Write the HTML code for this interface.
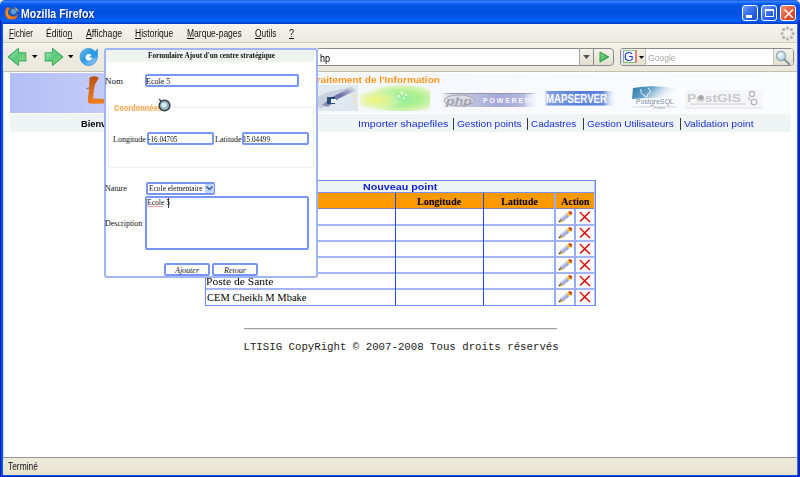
<!DOCTYPE html>
<html><head><meta charset="utf-8">
<style>
*{box-sizing:border-box}
html,body{margin:0;padding:0}
body{width:800px;height:477px;position:relative;overflow:hidden;background:#0054e3;font-family:"Liberation Sans",sans-serif}
.a{position:absolute}
.t{position:absolute;white-space:nowrap;line-height:1}
#title{left:0;top:0;width:800px;height:24px;border-radius:5px 5px 0 0;
background:linear-gradient(#0a3fd0 0,#3c8cff 1px,#2a78f8 2px,#0a5cf0 4px,#0052e5 7px,#0050e2 15px,#0058ee 18px,#0062f8 21px,#0048d8 23px,#0038c0 24px)}
#menubar{left:3px;top:24px;width:794px;height:19px;background:linear-gradient(#f4f3ee,#ecebe2);border-bottom:1px solid #d0cbb8}
#toolbar{left:3px;top:43px;width:794px;height:29px;background:linear-gradient(#f6f5ee,#eeece2 30%,#ebe8dc);border-bottom:1px solid #c4c0ae}
#content{left:3px;top:72px;width:794px;height:385px;background:#fff}
#status{left:3px;top:457px;width:794px;height:18px;background:linear-gradient(#ecead8,#ebe7d6 60%,#e6e2cc);border-top:1px solid #98968a}
.menu{font-size:10px;color:#111;top:29px}
.menu u{text-decoration:underline}
</style></head><body>
<div class="a" style="left:0;top:0;width:800px;height:10px;background:#f0e8c8"></div>
<div id="title" class="a"></div>
<div class="a" style="left:0;top:20px;width:1px;height:457px;background:#0818c0"></div>
<div class="a" style="left:798px;top:20px;width:2px;height:457px;background:#0a26b4"></div>
<div class="a" style="left:0;top:476px;width:800px;height:1px;background:#0828c0"></div>
<!-- firefox icon -->
<svg class="a" style="left:4px;top:6px" width="15" height="14"><circle cx="8.5" cy="6.5" r="5.5" fill="#2258b0"/><circle cx="9.5" cy="5.5" r="2.8" fill="#58a0e0"/><path d="M2.5 1.5Q4.5 0.8 6 2.5Q3.5 4 4 7.5Q5.5 11 10 10.5Q13 10 14 8Q13.5 13.5 8 13.5Q1.5 13.5 1 8Q1 4 2.5 1.5Z" fill="#f07010"/><path d="M3 3Q2 6 3 9Q4 12 8 12.5Q4.5 11 4 8Z" fill="#f8a030"/><path d="M10 1Q14 2 14.5 6L12.5 4.5Q11.5 2 10 1Z" fill="#f0b030"/></svg>
<div class="t" style="left:21px;top:8.2px;font-size:12px;font-weight:bold;color:#fff;transform:scaleX(0.88);transform-origin:0 0;text-shadow:1px 1px 0 #0030a0">Mozilla Firefox</div>
<!-- window buttons -->
<div class="a" style="left:742px;top:5px;width:16px;height:16px;border:1px solid #fff;border-radius:3px;background:linear-gradient(135deg,#6f9cf8,#2a62e8 60%,#1a50d8)"><div class="a" style="left:3px;top:9px;width:6px;height:3px;background:#fff"></div></div>
<div class="a" style="left:761px;top:5px;width:16px;height:16px;border:1px solid #fff;border-radius:3px;background:linear-gradient(135deg,#6f9cf8,#2a62e8 60%,#1a50d8)"><div class="a" style="left:3px;top:3px;width:9px;height:8px;border:1px solid #fff;border-top-width:2px"></div></div>
<div class="a" style="left:780px;top:5px;width:16px;height:16px;border:1px solid #fff;border-radius:3px;background:linear-gradient(135deg,#f09070,#e05030 60%,#c83818)">
<svg class="a" style="left:1px;top:1px" width="13" height="13"><path d="M2.5 2.5L11 11M11 2.5L2.5 11" stroke="#fff" stroke-width="1.5"/></svg></div>

<div id="menubar" class="a"></div>
<div class="t menu" style="left:9px;transform:scaleX(0.8);transform-origin:0 0"><u>F</u>ichier</div>
<div class="t menu" style="left:46px;transform:scaleX(0.86);transform-origin:0 0">Éditio<u>n</u></div>
<div class="t menu" style="left:86px;transform:scaleX(0.87);transform-origin:0 0"><u>A</u>ffichage</div>
<div class="t menu" style="left:135px;transform:scaleX(0.85);transform-origin:0 0"><u>H</u>istorique</div>
<div class="t menu" style="left:187px;transform:scaleX(0.85);transform-origin:0 0"><u>M</u>arque-pages</div>
<div class="t menu" style="left:255px;transform:scaleX(0.84);transform-origin:0 0"><u>O</u>utils</div>
<div class="t menu" style="left:289px;transform:scaleX(0.9);transform-origin:0 0"><u>?</u></div>
<!-- throbber -->
<svg class="a" style="left:780px;top:26px" width="15" height="15"><g fill="#b4b4b4"><circle cx="7.5" cy="2" r="1.6"/><circle cx="11.4" cy="3.6" r="1.6"/><circle cx="13" cy="7.5" r="1.6"/><circle cx="11.4" cy="11.4" r="1.6"/><circle cx="7.5" cy="13" r="1.6"/><circle cx="3.6" cy="11.4" r="1.6"/><circle cx="2" cy="7.5" r="1.6"/><circle cx="3.6" cy="3.6" r="1.6"/></g></svg>

<div id="toolbar" class="a"></div>
<!-- back -->
<svg class="a" style="left:7px;top:47px" width="21" height="20"><defs><linearGradient id="ga" x1="0" y1="0" x2="1" y2="1"><stop offset="0" stop-color="#b0ecb8"/><stop offset=".5" stop-color="#58c880"/><stop offset="1" stop-color="#a8dc68"/></linearGradient></defs>
<path d="M1.2 10L11.5 1.5V5.7H18.8V13.9H11.5V18.3Z" fill="url(#ga)" stroke="#3cb060" stroke-width="1.1" stroke-linejoin="round"/></svg>
<svg class="a" style="left:32px;top:55px" width="6" height="4"><path d="M0 0H5.5L2.75 3.2Z" fill="#000"/></svg>
<!-- forward -->
<svg class="a" style="left:43px;top:47px" width="21" height="20"><defs><linearGradient id="gb" x1="0" y1="0" x2="1" y2="1"><stop offset="0" stop-color="#b0ecb8"/><stop offset=".5" stop-color="#58c880"/><stop offset="1" stop-color="#a8dc68"/></linearGradient></defs>
<path d="M19.8 10L9.5 1.5V5.7H2.2V13.9H9.5V18.3Z" fill="url(#gb)" stroke="#3cb060" stroke-width="1.1" stroke-linejoin="round"/></svg>
<svg class="a" style="left:68px;top:55px" width="6" height="4"><path d="M0 0H5.5L2.75 3.2Z" fill="#000"/></svg>
<!-- reload -->
<svg class="a" style="left:79px;top:47px" width="21" height="21"><defs><linearGradient id="gr" x1="0" y1="0" x2="1" y2="1"><stop offset="0" stop-color="#70c0f0"/><stop offset=".45" stop-color="#2a98e0"/><stop offset="1" stop-color="#a8d8f4"/></linearGradient></defs>
<circle cx="9.6" cy="10" r="8.6" fill="url(#gr)" stroke="#3a90d8" stroke-width=".8"/><circle cx="9.8" cy="10.2" r="3.2" fill="#fff"/><path d="M18.8 1.2V10.6H10.2Z" fill="#2c9ae2"/></svg>
<!-- url bar -->
<div class="a" style="left:318px;top:48px;width:262px;height:18px;background:#fff;border-top:1px solid #8a8a8a;border-bottom:1px solid #8a8a8a"></div>
<div class="t" style="left:319.5px;top:52.5px;font-size:10.6px;color:#000;transform:scaleX(0.86);transform-origin:0 0">hp</div>
<div class="a" style="left:579px;top:48px;width:15px;height:18px;background:linear-gradient(#f4f2ea,#e2dfd0);border:1px solid #8a8a8a;border-left:1px solid #a0a0a8"></div>
<svg class="a" style="left:583px;top:55px" width="8" height="5"><path d="M0 0H7L3.5 4Z" fill="#555"/></svg>
<div class="a" style="left:593px;top:48px;width:21px;height:18px;background:linear-gradient(#f4f2ea,#e2dfd0);border:1px solid #8a8a8a;border-radius:0 4px 4px 0"></div>
<svg class="a" style="left:599px;top:51px" width="11" height="12"><defs><linearGradient id="gg" x1="0" y1="0" x2="1" y2="1"><stop offset="0" stop-color="#90d890"/><stop offset="1" stop-color="#28a040"/></linearGradient></defs><path d="M1 1L9.8 6L1 11Z" fill="url(#gg)" stroke="#2a9a40" stroke-width="1" stroke-linejoin="round"/></svg>
<!-- search -->
<div class="a" style="left:620px;top:48px;width:174px;height:18px;background:#fff;border:1px solid #8a8a8a;border-radius:3px 4px 4px 3px"></div>
<div class="a" style="left:621px;top:49px;width:25px;height:16px;background:linear-gradient(#f2f0e6,#e4e1d2);border-right:1px solid #c8c4b0;border-radius:2px 0 0 2px"></div>
<div class="a" style="left:623px;top:50px;width:14px;height:13px;background:#f4f8fc;border-top:1px solid #88d088;border-bottom:1px solid #70c070;border-left:1px solid #80a8e8;border-right:2px solid #e88070"></div>
<div class="t" style="left:624px;top:50px;font-size:13px;color:#1838c8;transform:scaleX(0.95);transform-origin:0 0">G</div>
<svg class="a" style="left:639px;top:56px" width="6" height="4"><path d="M0 0H5L2.5 3Z" fill="#000"/></svg>
<div class="t" style="left:648px;top:54px;font-size:9px;color:#a8a8a0;transform:scaleX(0.95);transform-origin:0 0">Google</div>
<div class="a" style="left:773px;top:49px;width:20px;height:16px;background:linear-gradient(#f2f0e6,#e4e1d2);border-left:1px solid #c8c4b0;border-radius:0 3px 3px 0"></div>
<svg class="a" style="left:775px;top:50px" width="16" height="15"><defs><radialGradient id="lg" cx=".4" cy=".35" r=".6"><stop offset="0" stop-color="#f8fcff"/><stop offset="1" stop-color="#b0d0e0"/></radialGradient></defs><circle cx="6" cy="6" r="4.6" fill="url(#lg)" stroke="#90a8b8" stroke-width="1.2"/><path d="M9.5 9.5L14 14" stroke="#8098a8" stroke-width="2.2" stroke-linecap="round"/></svg>

<div id="content" class="a"></div>
<div class="a" style="left:3px;top:72px;width:1px;height:385px;background:#d0dcf8"></div>
<div class="a" style="left:797px;top:24px;width:1px;height:451px;background:#3c6cea"></div>
<!-- banner -->
<div class="a" style="left:10px;top:73px;width:781px;height:40px;background:linear-gradient(90deg,#b2bef5 0,#c2cbf8 12%,#dfe4fb 28%,#f5f7fd 40%,#fbfcfe 100%)"></div>
<svg class="a" style="left:84px;top:74px" width="22" height="32"><defs><linearGradient id="gl" x1="0" y1="0" x2="0" y2="1"><stop offset="0" stop-color="#b85010"/><stop offset=".5" stop-color="#d86818"/><stop offset="1" stop-color="#f08020"/></linearGradient></defs><path d="M5.5 4Q7 2.2 10 2.2Q14 2.2 14.6 4.5Q13 7 11.2 10Q9.6 15 9.2 24.6L21 25L21 29.2Q12 30 5 29.6Q3.4 28.6 3.8 26Q5.4 16 5.5 4Z" fill="url(#gl)"/><path d="M2.5 14.5L5 14" stroke="#806050" stroke-width="1" fill="none"/></svg>
<div class="t" style="left:311.4px;top:75.5px;font-size:9px;font-weight:bold;color:#ff9618;transform:scaleX(1.12);transform-origin:0 0">Traitement de l'Information</div>
<!-- images -->
<svg class="a" style="left:318px;top:85px;filter:blur(0.6px)" width="40" height="26"><defs><linearGradient id="sb" x1="0" y1="0" x2="1" y2="1"><stop offset="0" stop-color="#e4ecf2"/><stop offset="1" stop-color="#dde6ee"/></linearGradient><linearGradient id="sd" x1="0" y1="1" x2="1" y2="0"><stop offset="0" stop-color="#9098b0"/><stop offset=".6" stop-color="#6a6ea8"/><stop offset="1" stop-color="#c8c8e0"/></linearGradient></defs>
<rect width="40" height="26" fill="url(#sb)"/><path d="M0 12Q10 6 20 5L34 2L38 6Q26 10 18 14Q10 19 4 24L0 22Z" fill="#c8d0dc"/><path d="M4 20L14 12L30 4L36 6L20 14L10 22Z" fill="url(#sd)"/><rect x="9" y="12" width="8" height="7" fill="#2a4a7a"/><rect x="13" y="14" width="5" height="4" fill="#e8f0f8"/><circle cx="36" cy="11" r="1.5" fill="#f8d8b0"/><circle cx="36" cy="17" r="1.5" fill="#f8d8b0"/></svg>
<svg class="a" style="left:360px;top:84px" width="70" height="27"><defs><radialGradient id="mg" cx=".6" cy=".55" r=".62"><stop offset="0" stop-color="#90eca0"/><stop offset=".45" stop-color="#b0f090"/><stop offset=".75" stop-color="#d8f4b8"/><stop offset="1" stop-color="#f6f9fb" stop-opacity="0"/></radialGradient><radialGradient id="my" cx=".22" cy=".6" r=".4"><stop offset="0" stop-color="#eef478"/><stop offset=".6" stop-color="#e8f4a0" stop-opacity=".6"/><stop offset="1" stop-color="#f4f8e0" stop-opacity="0"/></radialGradient></defs>
<rect width="70" height="27" fill="url(#mg)"/><rect width="70" height="27" fill="url(#my)"/><circle cx="42" cy="9" r="1.3" fill="#fff" opacity=".9"/><circle cx="46" cy="11" r="1.1" fill="#fff" opacity=".9"/><circle cx="39" cy="12" r="1" fill="#fff" opacity=".9"/><circle cx="44" cy="14" r="1" fill="#fff" opacity=".7"/></svg>
<svg class="a" style="left:441px;top:90px" width="100" height="20"><defs><linearGradient id="pp" x1="0" y1="0" x2="1" y2="0"><stop offset="0" stop-color="#f0f0f4" stop-opacity="0"/><stop offset=".06" stop-color="#e0e0ea"/><stop offset=".3" stop-color="#c0c2e0"/><stop offset=".6" stop-color="#a4a8d6"/><stop offset=".85" stop-color="#b8bce0"/><stop offset="1" stop-color="#f4f4fa" stop-opacity="0"/></linearGradient><linearGradient id="pt" x1="0" y1="0" x2="1" y2="0"><stop offset="0" stop-color="#808088" stop-opacity="0"/><stop offset=".1" stop-color="#808088"/><stop offset=".9" stop-color="#9090a0"/><stop offset="1" stop-color="#9090a0" stop-opacity="0"/></linearGradient></defs>
<rect x="0" y="3" width="97" height="14" fill="url(#pp)"/><rect x="0" y="3" width="97" height="1" fill="url(#pt)" opacity=".7"/><ellipse cx="18" cy="10.5" rx="15" ry="5.5" fill="#dcdce6" stroke="#9a9aa8" stroke-width=".8"/><text x="5" y="14.5" font-family="Liberation Sans" font-style="italic" font-size="11" fill="#a4a4ac" font-weight="bold" textLength="26" lengthAdjust="spacingAndGlyphs">php</text><text x="42" y="13.2" font-family="Liberation Sans" font-size="7" font-weight="bold" fill="#f8f8fc" textLength="47" lengthAdjust="spacing">POWERED</text></svg>
<svg class="a" style="left:542px;top:88px" width="76" height="20"><defs><linearGradient id="ms" x1="0" y1="0" x2="1" y2="0"><stop offset="0" stop-color="#c8d4f4" stop-opacity="0"/><stop offset=".05" stop-color="#7898e0"/><stop offset=".5" stop-color="#4a78d8"/><stop offset=".82" stop-color="#5a84dc"/><stop offset="1" stop-color="#e8eefa" stop-opacity="0"/></linearGradient><linearGradient id="mv" x1="0" y1="0" x2="0" y2="1"><stop offset="0" stop-color="#fff" stop-opacity="0"/><stop offset=".5" stop-color="#fff" stop-opacity=".25"/><stop offset="1" stop-color="#fff" stop-opacity="0"/></linearGradient></defs>
<rect x="2" y="3" width="72" height="14.5" fill="url(#ms)"/><rect x="2" y="3" width="72" height="14.5" fill="url(#mv)"/><text x="4" y="15.4" font-family="Liberation Sans" font-size="13.6" font-weight="bold" fill="#fbfcff" textLength="61" lengthAdjust="spacingAndGlyphs">MAPSERVER</text></svg>
<svg class="a" style="left:630px;top:84px;filter:blur(0.5px)" width="50" height="26"><defs><linearGradient id="pg" x1="0" y1="0" x2="1" y2=".3"><stop offset="0" stop-color="#2a78a8"/><stop offset=".45" stop-color="#6aa4c8"/><stop offset="1" stop-color="#f4f8fc" stop-opacity="0"/></linearGradient></defs>
<path d="M3 4Q25 0 48 5L47 15Q25 13 2 15Z" fill="url(#pg)"/><path d="M11 5Q10 10 14 11Q15 14 17 13Q16 10 20 9Q21 5 18 4" stroke="#e8f4fa" stroke-width="1" fill="none"/><text x="6" y="20" font-family="Liberation Sans" font-size="6.8" fill="#8088a0" textLength="38" lengthAdjust="spacingAndGlyphs">PostgreSQL</text><text x="24" y="24.5" font-family="Liberation Sans" font-size="4" fill="#9098a8">Power</text><rect x="3" y="22.5" width="44" height=".8" fill="#c8ccd4"/></svg>
<svg class="a" style="left:684px;top:88px" width="80" height="22"><rect x="1" y="2" width="78" height="19" rx="2" fill="#f6f6f8"/><rect x="1" y="19.5" width="78" height="1" fill="#e4e4e8"/><text x="3" y="13.5" font-family="Liberation Sans" font-size="11" font-weight="bold" fill="#c8c8cc" textLength="54" lengthAdjust="spacingAndGlyphs">PostGIS</text><circle cx="17" cy="9.5" r="2.6" fill="#a8a8ac"/><rect x="6" y="15.5" width="56" height="1.2" fill="#d4d4d8"/><circle cx="68" cy="6" r="2.6" fill="none" stroke="#b0b0b4" stroke-width="1.1"/><circle cx="70" cy="14" r="2.8" fill="none" stroke="#b0b0b4" stroke-width="1.1"/><path d="M65 9Q64 12 67 12" stroke="#b8b8bc" stroke-width="1.1" fill="none"/></svg>
<!-- nav row -->
<div class="a" style="left:10px;top:114px;width:781px;height:18px;background:#eef3f3"></div>
<div class="t" style="left:81px;top:120px;font-size:8.6px;font-weight:bold;color:#000;transform:scaleX(1.08);transform-origin:0 0">Bienvenue</div>
<div class="t" style="left:358.3px;top:119px;font-size:9.8px;color:#1a2ed8;transform:scaleX(1.085);transform-origin:0 0">Importer shapefiles</div>
<div class="t" style="left:456.9px;top:119px;font-size:9.8px;color:#1a2ed8;transform:scaleX(1.03);transform-origin:0 0">Gestion points</div>
<div class="t" style="left:531.3px;top:119px;font-size:9.8px;color:#1a2ed8;transform:scaleX(1.01);transform-origin:0 0">Cadastres</div>
<div class="t" style="left:586.6px;top:119px;font-size:9.8px;color:#1a2ed8;transform:scaleX(1.02);transform-origin:0 0">Gestion Utilisateurs</div>
<div class="t" style="left:683.7px;top:119px;font-size:9.8px;color:#1a2ed8;transform:scaleX(1.05);transform-origin:0 0">Validation point</div>
<div class="a" style="left:453px;top:118px;width:1px;height:12px;background:#383838"></div>
<div class="a" style="left:527px;top:118px;width:1px;height:12px;background:#383838"></div>
<div class="a" style="left:583px;top:118px;width:1px;height:12px;background:#383838"></div>
<div class="a" style="left:680px;top:118px;width:1px;height:12px;background:#383838"></div>

<!-- table -->
<div class="a" style="left:205px;top:180px;width:391px;height:126px;border:1px solid #6c8cf0;background:#fff"></div>
<div class="a" style="left:206px;top:181px;width:389px;height:12px;background:#eef3f3;border-bottom:1px solid #6c8cf0"></div>
<div class="t" style="left:363px;top:183px;font-size:9px;font-weight:bold;color:#1020d8;transform:scaleX(1.19);transform-origin:0 0">Nouveau point</div>
<div class="a" style="left:206px;top:192px;width:389px;height:17px;background:#ff9900;border-top:1px solid #7890e8;border-bottom:1px solid #8c80b8"></div>
<div class="a" style="left:206px;top:224px;width:389px;height:2px;background:#a4b4f8"></div>
<div class="a" style="left:206px;top:240px;width:389px;height:2px;background:#a4b4f8"></div>
<div class="a" style="left:206px;top:256px;width:389px;height:2px;background:#a4b4f8"></div>
<div class="a" style="left:206px;top:272px;width:389px;height:2px;background:#a4b4f8"></div>
<div class="a" style="left:206px;top:288px;width:389px;height:2px;background:#a4b4f8"></div>
<div class="a" style="left:395px;top:193px;width:1px;height:112px;background:#2848e0"></div>
<div class="a" style="left:483px;top:193px;width:1px;height:112px;background:#2848e0"></div>
<div class="a" style="left:554px;top:193px;width:2px;height:112px;background:#98acf8"></div>
<div class="a" style="left:574px;top:209px;width:2px;height:96px;background:#98acf8"></div>
<div class="a" style="left:594px;top:181px;width:1px;height:124px;background:#b4c4fa"></div>
<div class="t" style="left:417px;top:197px;font-family:'Liberation Serif',serif;font-weight:bold;font-size:10px;color:#000">Longitude</div>
<div class="t" style="left:501px;top:197px;font-family:'Liberation Serif',serif;font-weight:bold;font-size:10px;color:#000">Latitude</div>
<div class="t" style="left:561px;top:197px;font-family:'Liberation Serif',serif;font-weight:bold;font-size:10px;color:#000">Action</div>
<div class="t" style="left:206px;top:277px;font-family:'Liberation Serif',serif;font-size:10.5px;color:#000;transform:scaleX(1.1);transform-origin:0 0">Poste de Sante</div>
<div class="t" style="left:207px;top:293px;font-family:'Liberation Serif',serif;font-size:10.5px;color:#000">CEM Cheikh M Mbake</div>
<svg class="a" style="left:557px;top:210px" width="17" height="14"><path d="M1.50 12.30 L3.47 11.89 L2.36 10.48Z" fill="#101010"/><path d="M3.47 11.89 L5.88 11.40 L3.41 8.26 L2.36 10.48Z" fill="#b08828"/><path d="M5.88 11.40 L12.17 6.46 L9.70 3.31 L3.41 8.26Z" fill="#9ca4d8"/><path d="M4.52 9.67 L10.81 4.73 L9.70 3.31 L3.41 8.26Z" fill="#c4c8ec"/><path d="M12.17 6.46 L13.74 5.22 L11.27 2.07 L9.70 3.31Z" fill="#f0cc18"/><path d="M13.74 5.22 L15.21 4.07 L15.09 2.63 L14.11 1.37 L12.73 0.92 L11.27 2.07Z" fill="#e03828"/></svg>
<svg class="a" style="left:578px;top:210px" width="14" height="13"><path d="M2 2.3L12 12M11.8 1.8L2.2 11.6" stroke="#e00000" stroke-width="1.45" fill="none"/><path d="M3 3.5L5 5.5" stroke="#f06030" stroke-width=".8"/></svg>
<svg class="a" style="left:557px;top:226px" width="17" height="14"><path d="M1.50 12.30 L3.47 11.89 L2.36 10.48Z" fill="#101010"/><path d="M3.47 11.89 L5.88 11.40 L3.41 8.26 L2.36 10.48Z" fill="#b08828"/><path d="M5.88 11.40 L12.17 6.46 L9.70 3.31 L3.41 8.26Z" fill="#9ca4d8"/><path d="M4.52 9.67 L10.81 4.73 L9.70 3.31 L3.41 8.26Z" fill="#c4c8ec"/><path d="M12.17 6.46 L13.74 5.22 L11.27 2.07 L9.70 3.31Z" fill="#f0cc18"/><path d="M13.74 5.22 L15.21 4.07 L15.09 2.63 L14.11 1.37 L12.73 0.92 L11.27 2.07Z" fill="#e03828"/></svg>
<svg class="a" style="left:578px;top:226px" width="14" height="13"><path d="M2 2.3L12 12M11.8 1.8L2.2 11.6" stroke="#e00000" stroke-width="1.45" fill="none"/><path d="M3 3.5L5 5.5" stroke="#f06030" stroke-width=".8"/></svg>
<svg class="a" style="left:557px;top:242px" width="17" height="14"><path d="M1.50 12.30 L3.47 11.89 L2.36 10.48Z" fill="#101010"/><path d="M3.47 11.89 L5.88 11.40 L3.41 8.26 L2.36 10.48Z" fill="#b08828"/><path d="M5.88 11.40 L12.17 6.46 L9.70 3.31 L3.41 8.26Z" fill="#9ca4d8"/><path d="M4.52 9.67 L10.81 4.73 L9.70 3.31 L3.41 8.26Z" fill="#c4c8ec"/><path d="M12.17 6.46 L13.74 5.22 L11.27 2.07 L9.70 3.31Z" fill="#f0cc18"/><path d="M13.74 5.22 L15.21 4.07 L15.09 2.63 L14.11 1.37 L12.73 0.92 L11.27 2.07Z" fill="#e03828"/></svg>
<svg class="a" style="left:578px;top:242px" width="14" height="13"><path d="M2 2.3L12 12M11.8 1.8L2.2 11.6" stroke="#e00000" stroke-width="1.45" fill="none"/><path d="M3 3.5L5 5.5" stroke="#f06030" stroke-width=".8"/></svg>
<svg class="a" style="left:557px;top:258px" width="17" height="14"><path d="M1.50 12.30 L3.47 11.89 L2.36 10.48Z" fill="#101010"/><path d="M3.47 11.89 L5.88 11.40 L3.41 8.26 L2.36 10.48Z" fill="#b08828"/><path d="M5.88 11.40 L12.17 6.46 L9.70 3.31 L3.41 8.26Z" fill="#9ca4d8"/><path d="M4.52 9.67 L10.81 4.73 L9.70 3.31 L3.41 8.26Z" fill="#c4c8ec"/><path d="M12.17 6.46 L13.74 5.22 L11.27 2.07 L9.70 3.31Z" fill="#f0cc18"/><path d="M13.74 5.22 L15.21 4.07 L15.09 2.63 L14.11 1.37 L12.73 0.92 L11.27 2.07Z" fill="#e03828"/></svg>
<svg class="a" style="left:578px;top:258px" width="14" height="13"><path d="M2 2.3L12 12M11.8 1.8L2.2 11.6" stroke="#e00000" stroke-width="1.45" fill="none"/><path d="M3 3.5L5 5.5" stroke="#f06030" stroke-width=".8"/></svg>
<svg class="a" style="left:557px;top:274px" width="17" height="14"><path d="M1.50 12.30 L3.47 11.89 L2.36 10.48Z" fill="#101010"/><path d="M3.47 11.89 L5.88 11.40 L3.41 8.26 L2.36 10.48Z" fill="#b08828"/><path d="M5.88 11.40 L12.17 6.46 L9.70 3.31 L3.41 8.26Z" fill="#9ca4d8"/><path d="M4.52 9.67 L10.81 4.73 L9.70 3.31 L3.41 8.26Z" fill="#c4c8ec"/><path d="M12.17 6.46 L13.74 5.22 L11.27 2.07 L9.70 3.31Z" fill="#f0cc18"/><path d="M13.74 5.22 L15.21 4.07 L15.09 2.63 L14.11 1.37 L12.73 0.92 L11.27 2.07Z" fill="#e03828"/></svg>
<svg class="a" style="left:578px;top:274px" width="14" height="13"><path d="M2 2.3L12 12M11.8 1.8L2.2 11.6" stroke="#e00000" stroke-width="1.45" fill="none"/><path d="M3 3.5L5 5.5" stroke="#f06030" stroke-width=".8"/></svg>
<svg class="a" style="left:557px;top:290px" width="17" height="14"><path d="M1.50 12.30 L3.47 11.89 L2.36 10.48Z" fill="#101010"/><path d="M3.47 11.89 L5.88 11.40 L3.41 8.26 L2.36 10.48Z" fill="#b08828"/><path d="M5.88 11.40 L12.17 6.46 L9.70 3.31 L3.41 8.26Z" fill="#9ca4d8"/><path d="M4.52 9.67 L10.81 4.73 L9.70 3.31 L3.41 8.26Z" fill="#c4c8ec"/><path d="M12.17 6.46 L13.74 5.22 L11.27 2.07 L9.70 3.31Z" fill="#f0cc18"/><path d="M13.74 5.22 L15.21 4.07 L15.09 2.63 L14.11 1.37 L12.73 0.92 L11.27 2.07Z" fill="#e03828"/></svg>
<svg class="a" style="left:578px;top:290px" width="14" height="13"><path d="M2 2.3L12 12M11.8 1.8L2.2 11.6" stroke="#e00000" stroke-width="1.45" fill="none"/><path d="M3 3.5L5 5.5" stroke="#f06030" stroke-width=".8"/></svg>

<!-- footer -->
<div class="a" style="left:244px;top:328px;width:313px;height:2px;border-top:1px solid #a0a0a0;border-bottom:1px solid #e8e8e8"></div>
<div class="t" style="left:243.5px;top:342px;font-family:'Liberation Mono',monospace;font-size:10.72px;color:#222">LTISIG CopyRight © 2007-2008 Tous droits réservés</div>

<div id="status" class="a"></div>
<div class="t" style="left:8px;top:461.5px;font-size:10px;color:#111;transform:scaleX(0.84);transform-origin:0 0">Terminé</div>

<!-- popup -->
<div class="a" style="left:104px;top:48px;width:214px;height:230px;background:#fff;border:2px solid #a0b4f8;border-radius:3px"></div>
<div class="a" style="left:106px;top:50px;width:208px;height:12px;background:#eef3f0"></div>
<div class="t" style="left:148px;top:52px;font-family:'Liberation Serif',serif;font-weight:bold;font-size:8px;color:#111;transform:scaleX(0.9);transform-origin:0 0">Formulaire Ajout d'un centre stratégique</div>
<div class="t" style="left:105px;top:77px;font-family:'Liberation Serif',serif;font-size:9px;color:#111">Nom</div>
<div class="a" style="left:145px;top:74px;width:154px;height:13px;border:2px solid #7896f6;border-radius:2px"></div>
<div class="t" style="left:146px;top:78px;font-family:'Liberation Serif',serif;font-size:8px;color:#111">Ecole 5</div>
<!-- fieldset -->
<div class="a" style="left:108px;top:107px;width:206px;height:61px;border:1px solid #eaf2ec"></div>
<div class="a" style="left:112px;top:100px;width:60px;height:12px;background:#fff"></div>
<div class="t" style="left:114px;top:104px;font-size:8.6px;font-weight:bold;color:#ffa040;transform:scaleX(0.86);transform-origin:0 0">Coordonnées</div>
<svg class="a" style="left:157px;top:98px" width="15" height="15"><path d="M2 1L5 4" stroke="#303840" stroke-width="1.2"/><circle cx="7.5" cy="7.5" r="5.3" fill="#90b4c4" stroke="#383f48" stroke-width="1.6"/><circle cx="7" cy="7" r="2.6" fill="#d8ecf4"/></svg>
<div class="t" style="left:113px;top:136px;font-family:'Liberation Serif',serif;font-size:8px;color:#111">Longitude</div>
<div class="a" style="left:147px;top:132px;width:67px;height:13px;border:2px solid #7896f6;border-radius:2px"></div>
<div class="t" style="left:148px;top:136px;font-family:'Liberation Serif',serif;font-size:8px;color:#111;transform:scaleX(0.9);transform-origin:0 0">-16.04705</div>
<div class="t" style="left:215px;top:136px;font-family:'Liberation Serif',serif;font-size:8px;color:#111">Latitude</div>
<div class="a" style="left:242px;top:132px;width:67px;height:13px;border:2px solid #7896f6;border-radius:2px"></div>
<div class="t" style="left:243px;top:136px;font-family:'Liberation Serif',serif;font-size:8px;color:#111;transform:scaleX(0.9);transform-origin:0 0">15.04499</div>
<!-- nature -->
<div class="t" style="left:105px;top:185px;font-family:'Liberation Serif',serif;font-size:8px;color:#111">Nature</div>
<div class="a" style="left:146px;top:182px;width:69px;height:13px;border:2px solid #7896f6;border-radius:2px"></div>
<div class="t" style="left:149px;top:185px;font-family:'Liberation Serif',serif;font-size:8px;color:#111;transform:scaleX(0.93);transform-origin:0 0">Ecole elementaire</div>
<div class="a" style="left:205px;top:184px;width:9px;height:9px;background:#c4d4f8"></div>
<svg class="a" style="left:206px;top:186px" width="7" height="5"><path d="M0.5 0.5L3.5 3.5L6.5 0.5" stroke="#3050a0" stroke-width="1.4" fill="none"/></svg>
<div class="t" style="left:105px;top:220px;font-family:'Liberation Serif',serif;font-size:8px;color:#111">Description</div>
<div class="a" style="left:145px;top:196px;width:164px;height:54px;border:2px solid #7896f6;border-radius:2px"></div>
<div class="t" style="left:147px;top:199px;font-family:'Liberation Serif',serif;font-size:7.6px;color:#111">Ecole 5</div>
<div class="a" style="left:147px;top:206px;width:16px;height:1px;background:#f0a0a0"></div>
<div class="a" style="left:168px;top:198px;width:1px;height:10px;background:#333"></div>
<!-- buttons -->
<div class="a" style="left:164px;top:263px;width:46px;height:13px;border:2px solid #7896f6;border-radius:2px"></div>
<div class="t" style="left:175px;top:267px;font-family:'Liberation Serif',serif;font-style:italic;font-size:8px;color:#111">Ajouter</div>
<div class="a" style="left:212px;top:263px;width:46px;height:13px;border:2px solid #7896f6;border-radius:2px"></div>
<div class="t" style="left:224px;top:267px;font-family:'Liberation Serif',serif;font-style:italic;font-size:8px;color:#111">Retour</div>
</body></html>
